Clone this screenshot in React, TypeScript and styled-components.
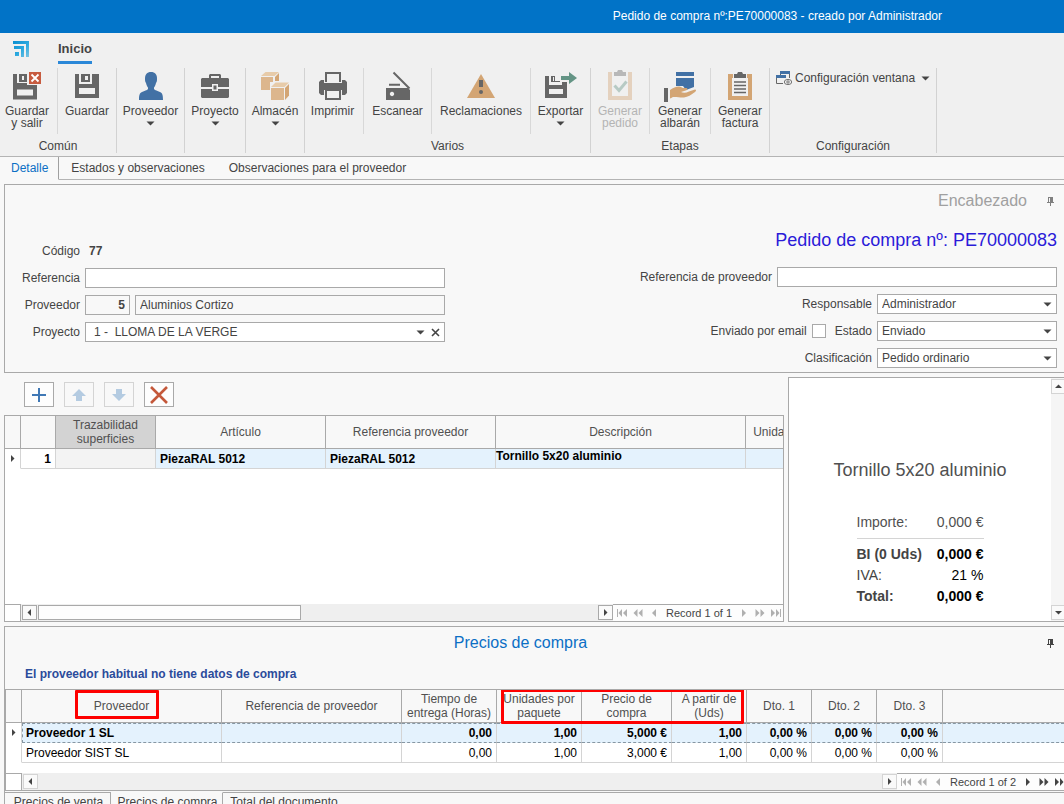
import React from "react";
import styled, { createGlobalStyle, css } from "styled-components";

const line = "#a9a9a9";
const softLine = "#d4d4d4";
const ink = "#444444";
const iconGrey = "#666666";
const blue = "#4271a5";
const tan = "#d3a574";

const GlobalStyle = createGlobalStyle`
  *, *::before, *::after { box-sizing: border-box; }
  html { overflow: hidden; }
  body {
    margin: 0;
    background: #f8f8f8;
    color: ${ink};
    font: 12px/14px "Liberation Sans", Arial, sans-serif;
  }
  button, input, select { font: inherit; color: inherit; margin: 0; border-radius: 0; }
  button { padding: 0; border: 0; background: none; }
  svg { display: block; flex: none; }
`;

const Page = styled.div`
  display: flex;
  flex-direction: column;
  min-height: 100vh;
`;

const TitleBar = styled.header`
  display: flex;
  align-items: center;
  justify-content: flex-end;
  height: 33px;
  padding: 0 122px 2px 0;
  background: #0173c7;
  color: #ffffff;
`;

/* ---------- ribbon ---------- */

const Ribbon = styled.nav`
  background: #f0f0f0;
  border-bottom: 1px solid #b4b4b4;
  padding-bottom: 3px;
`;

const RibbonTabs = styled.div`
  display: flex;
  align-items: flex-start;
  gap: 29px;
  height: 35px;
  padding: 8px 0 0 13px;
`;

const RibbonTab = styled.button`
  height: 23px;
  padding-bottom: 5px;
  border-bottom: 3px solid #2b88d8;
  font-size: 13px;
  font-weight: bold;
  line-height: 15px;
`;

const RibbonGroups = styled.div`
  display: flex;
  height: 85px;
`;

const Group = styled.section`
  display: flex;
  flex-direction: column;
  border-right: 1px solid #d2d2d2;
`;

const GroupButtons = styled.div`
  display: flex;
  flex: 1;
`;

const GroupLabel = styled.div`
  height: 14px;
  text-align: center;
`;

const BigButton = styled.button<{ $w: number }>`
  display: flex;
  flex-direction: column;
  align-items: center;
  width: ${(p) => p.$w}px;
  height: 66px;
  padding-top: 2px;
  line-height: 12px;
  & + & { border-left: 1px solid #d8d8d8; }
  &:first-child:not(:only-child) { padding-right: 3px; }
  &:disabled { color: #b4b4b4; padding-right: 0; }
  &:disabled:first-child { padding-right: 0; }
  &:disabled svg { opacity: 0.4; }
  svg + span { margin-top: 3px; }
`;

const ArrowLine = styled.span`
  display: flex;
  align-items: center;
  height: 12px;
`;

const MenuButton = styled.button`
  display: flex;
  align-items: center;
  gap: 3px;
  width: 166px;
  height: 20px;
  padding-left: 6px;
  span + svg { margin-left: 3px; }
`;

/* ---------- document tabs ---------- */

const DocTabs = styled.div`
  display: flex;
  height: 23px;
`;

const DocTab = styled.button<{ $on?: boolean }>`
  padding: 0 12px;
  border-bottom: 1px solid #b4b4b4;
  ${(p) =>
    p.$on &&
    css`
      padding: 0 10px 0 11px;
      color: #0b6fc5;
      border-bottom-color: transparent;
      border-right: 1px solid #a0a0a0;
    `}
`;

const TabFill = styled.div`
  flex: 1;
  border-bottom: 1px solid #b4b4b4;
`;

/* ---------- header form ---------- */

const Panel = styled.section`
  margin: 4px 0 0 4px;
  border: 1px solid ${line};
  border-right: 0;
`;

const PanelHead = styled.div`
  display: flex;
  align-items: center;
  justify-content: flex-end;
  gap: 20px;
  height: 32px;
  padding-right: 9px;
  font-size: 16px;
  color: #a0a0a0;
  h2 { margin: 0; font: inherit; }
  svg { color: #808080; }
`;

const FormBody = styled.div`
  display: flex;
  justify-content: space-between;
  padding: 0 7px 4px 0;
`;

const LeftFields = styled.div`
  display: grid;
  grid-template-columns: 75px 360px;
  grid-auto-rows: 20px;
  gap: 7px 5px;
  align-items: center;
  align-content: start;
  padding-top: 24px;
  > label, > span { text-align: right; }
`;

const Code = styled.output`
  padding-left: 4px;
  font-weight: bold;
`;

const RightFields = styled.div`
  display: flex;
  flex-direction: column;
  align-items: flex-end;
  gap: 7px;
  padding-top: 11px;
`;

const OrderTitle = styled.h1`
  margin: 0 0 8px;
  font-size: 18px;
  font-weight: normal;
  line-height: 24px;
  color: #2b1bd8;
`;

const Row = styled.div`
  display: flex;
  align-items: center;
  gap: 5px;
  height: 20px;
`;

const TextBox = styled.input<{ $w?: number }>`
  width: ${(p) => (p.$w ? p.$w + "px" : "100%")};
  height: 20px;
  padding: 0 4px;
  border: 1px solid ${line};
  background: #ffffff;
  outline: none;
  &:read-only { background: #f8f8f8; }
`;

const CodeBox = styled(TextBox)`
  flex: none;
  font-weight: bold;
  text-align: right;
`;

const Tick = styled.input`
  appearance: none;
  width: 14px;
  height: 14px;
  margin: 0 4px 0 0;
  border: 1px solid ${line};
  background: #ffffff;
`;

const SelectBox = styled.div<{ $w?: number }>`
  display: flex;
  align-items: center;
  position: relative;
  width: ${(p) => (p.$w ? p.$w + "px" : "100%")};
  height: 20px;
  border: 1px solid ${line};
  background: #ffffff;
  select {
    appearance: none;
    flex: 1;
    height: 18px;
    padding: 0 4px;
    border: 0;
    background: transparent;
    outline: none;
  }
`;

const Caret = styled.span<{ $right: number }>`
  position: absolute;
  right: ${(p) => p.$right}px;
  pointer-events: none;
`;

const ProjectSelect = styled(SelectBox)`
  select { padding-left: 8px; }
`;

const ClearButton = styled.button`
  display: grid;
  place-items: center;
  width: 17px;
  height: 18px;
`;

/* ---------- order lines ---------- */

const Middle = styled.div`
  display: flex;
  gap: 4px;
  min-height: 245px;
  margin: 4px 0 0 4px;
`;

const Lines = styled.section`
  display: flex;
  flex: 1;
  flex-direction: column;
  min-width: 0;
`;

const ToolRow = styled.div`
  display: flex;
  gap: 10px;
  padding: 5px 0 8px 20px;
`;

const ToolButton = styled.button`
  display: grid;
  place-items: center;
  width: 30px;
  height: 25px;
  border: 1px solid ${line};
  background: #fdfdfd;
  &:disabled { border-color: ${softLine}; background: transparent; }
`;

const GridBox = styled.div`
  display: flex;
  flex: 1;
  flex-direction: column;
  justify-content: space-between;
  min-width: 0;
  overflow: hidden;
  border: 1px solid ${line};
  background: #ffffff;
`;

const PriceGrid = styled(GridBox)`
  min-height: 102px;
  border-right: 0;
`;

const DataTable = styled.table<{ $w: string }>`
  table-layout: fixed;
  width: ${(p) => p.$w};
  border-collapse: separate;
  border-spacing: 0;
  color: #000000;
`;

const Th = styled.th<{ $w?: number; $marked?: boolean }>`
  position: relative;
  width: ${(p) => (p.$w ? p.$w + "px" : "auto")};
  height: 33px;
  padding: 0;
  border-right: 1px solid ${line};
  border-bottom: 1px solid ${line};
  background: ${(p) => (p.$marked ? "#d3d3d3" : "#f8f8f8")};
  color: #505050;
  font-weight: normal;
  &:last-child { border-right: 0; }
`;

const Td = styled.td<{ $num?: boolean; $tone?: string; $bold?: boolean }>`
  height: 20px;
  padding: 0 4px;
  border-right: 1px solid ${softLine};
  border-bottom: 1px solid ${softLine};
  background: ${(p) => p.$tone || "#ffffff"};
  text-align: ${(p) => (p.$num ? "right" : "left")};
  font-weight: ${(p) => (p.$bold ? "bold" : "normal")};
  white-space: nowrap;
  &:last-child { border-right: 0; }
`;

const MarkerTd = styled(Td)`
  padding-left: 3px;
  border-bottom-color: transparent;
`;

const TopTd = styled(Td)`
  padding: 0;
  vertical-align: top;
`;

const FocusTd = styled(Td)`
  border-top: 1px dashed #8797a3;
  border-bottom: 1px dashed #8797a3;
  &:nth-child(2) { border-left: 1px dashed #8797a3; padding-left: 3px; }
`;

const Highlight = styled.span<{ $l: number; $t: number; $w: number; $h: number }>`
  position: absolute;
  z-index: 2;
  left: ${(p) => p.$l}px;
  top: ${(p) => p.$t}px;
  width: ${(p) => p.$w}px;
  height: ${(p) => p.$h}px;
  border: 3px solid #fe0000;
  border-radius: 1px;
  pointer-events: none;
`;

const GridFoot = styled.div`
  display: flex;
  height: 17px;
`;

const FootCorner = styled.div`
  width: 16px;
  border-top: 1px solid ${line};
  border-right: 1px solid ${line};
`;

const Track = styled.div`
  display: flex;
  align-items: center;
  flex: 1;
  gap: 1px;
  padding: 0 0 0 1px;
  background: #efefef;
`;

const StepButton = styled.button<{ $soft?: boolean }>`
  display: grid;
  place-items: center;
  width: 15px;
  height: 15px;
  border: 1px solid ${(p) => (p.$soft ? softLine : line)};
  background: #fafafa;
`;

const Thumb = styled.div`
  width: 263px;
  height: 15px;
  border: 1px solid ${line};
  background: #fdfdfd;
`;

const Spacer = styled.div`
  flex: 1;
`;

const Pager = styled.div<{ $w: number }>`
  display: flex;
  align-items: center;
  flex: none;
  width: ${(p) => p.$w}px;
  overflow: hidden;
  padding-left: 1px;
  border-top: 1px solid ${line};
  background: #fdfdfd;
  font-size: 11px;
  span { flex: none; width: 74px; text-align: center; }
`;

const PagerButton = styled.button`
  display: grid;
  place-items: center;
  flex: none;
  width: 16px;
  height: 16px;
  color: #444444;
  &:disabled { color: #b0b0b0; }
`;

/* ---------- totals ---------- */

const Totals = styled.aside`
  display: flex;
  width: 276px;
  border: 1px solid ${line};
  border-right: 0;
  background: #ffffff;
`;

const TotalsBody = styled.div`
  display: flex;
  flex: 1;
  flex-direction: column;
  align-items: center;
  padding-top: 80px;
  h3 {
    margin: 0 0 30px;
    font-size: 18px;
    font-weight: normal;
    line-height: 24px;
    color: #505050;
  }
`;

const TotalsTable = styled.table`
  width: 127px;
  border-collapse: collapse;
  font-size: 14px;
  line-height: 21px;
  white-space: nowrap;
  th, td { padding: 0; font-weight: normal; }
  th { text-align: left; }
  td { text-align: right; color: #000000; }
`;

const FirstTotal = styled.tr`
  th, td { padding-bottom: 5px; border-bottom: 1px solid ${softLine}; color: #505050; }
  & + tr > * { padding-top: 5px; }
`;

const StrongTotal = styled.tr`
  th, td { font-weight: bold; }
`;

const VTrack = styled.div`
  display: flex;
  flex-direction: column;
  justify-content: space-between;
  width: 13px;
  padding: 1px 0;
  background: #f5f5f5;
`;

/* ---------- purchase prices ---------- */

const PricePanel = styled.section`
  margin: 4px 0 0 4px;
  border: 1px solid ${line};
  border-right: 0;
  border-bottom: 0;
`;

const PriceHead = styled.div`
  display: flex;
  align-items: center;
  height: 32px;
  padding-right: 9px;
  color: ${ink};
  h2 {
    flex: 1;
    margin: 0;
    padding-right: 11px;
    font-size: 16px;
    font-weight: normal;
    line-height: 20px;
    text-align: center;
    color: #0b6fc5;
  }
`;

const Notice = styled.p`
  margin: 8px 0 8px 20px;
  font-weight: bold;
  color: #2b4b9b;
`;

const FootTabs = styled.div`
  display: flex;
  height: 22px;
  margin-top: 1px;
`;

const FootTab = styled.button<{ $w: number; $on?: boolean }>`
  width: ${(p) => p.$w}px;
  padding: 0 0 4px 2px;
  border-top: 1px solid ${(p) => (p.$on ? "transparent" : line)};
  border-right: 1px solid ${line};
  &:last-of-type { border-right: 0; }
`;

const FootFill = styled.div`
  flex: 1;
  border-top: 1px solid ${line};
`;

/* ---------- drawings ---------- */

const Icon = ({ children, size = 32 }: { children: React.ReactNode; size?: number }) => (
  <svg width={size} height={size} viewBox={`0 0 ${size} ${size}`} aria-hidden="true">
    {children}
  </svg>
);

const Down = () => (
  <svg width="9" height="5" viewBox="0 0 9 5" aria-hidden="true">
    <path d="M0.500 0.500h8L4.500 4.500z" fill="#444" />
  </svg>
);

const Side = ({ dir }: { dir: "l" | "r" | "u" | "d" }) => {
  const d = { l: "M6 1v7L2.500 4.500z", r: "M3 1v7L6.500 4.500z", u: "M1 6h7L4.500 2.500z", d: "M1 3h7L4.500 6.500z" }[dir];
  return (
    <svg width="9" height="9" viewBox="0 0 9 9" aria-hidden="true">
      <path d={d} fill="#444" />
    </svg>
  );
};

const Pin = () => (
  <svg width="8" height="9" viewBox="0 0 8 9" aria-hidden="true">
    <path d="M1 0h5v5h1v1H4v3H3V6H0V5h1zM2 1v4h1V1z" fill="currentColor" fillRule="evenodd" />
  </svg>
);

const Logo = () => (
  <svg width="16" height="16" viewBox="0 0 16 16" aria-hidden="true">
    <defs>
      <linearGradient id="logoShade" x1="0" y1="0" x2="1" y2="1">
        <stop offset="0" stopColor="#0d8fd0" />
        <stop offset="0.550" stopColor="#2ba9df" />
        <stop offset="1" stopColor="#7cc4e2" />
      </linearGradient>
    </defs>
    <path d="M0 0h16v16h-3V3H0zM1 5h10v11H8V8H1zM2 11h4v4H2z" fill="url(#logoShade)" />
  </svg>
);

const floppy = "M0 0h4v10h13V0h7v24H0zM4 14v6h16v-6zM6 0h9v8H6zM10 2v4h3V2z";

const icons = {
  saveExit: (
    <>
      <path d="M2 4h4v9h10v2h10v14.500H2zM6 19.500v6h16v-6zM8 4h8v8H8zM11 6v4h2V6z" fill={iconGrey} fillRule="evenodd" />
      <path d="M18 2h12v12H18z" fill="#c75b3f" />
      <path d="M20.500 4.500l7 7M27.500 4.500l-7 7" stroke="#fff" strokeWidth="1.800" />
    </>
  ),
  save: <path transform="translate(4 4)" d={floppy} fill={iconGrey} fillRule="evenodd" />,
  user: (
    <path
      d="M16 2c4 0 6 2.500 6 6.500 0 2 0 3-1 4.500-.6 2.500-1.500 4-2 4.500v1.500c1 1.300 3.500 2 6 3 2.500 1 3 3.500 3 8H4c0-4.500.5-7 3-8 2.500-1 5-1.700 6-3v-1.500c-.5-.5-1.400-2-2-4.500-1-1.500-1-2.500-1-4.500C10 4.500 12 2 16 2z"
      fill={blue}
    />
  ),
  brief: (
    <path
      d="M10 8V5l1-1h10l1 1v3h7l1 1v8H19v-3h-6v3H2V9l1-1zM12 6v2h8V6zM2 19h11v2h6v-2h11v8l-1 1H3l-1-1zM14.500 15.500h3v4h-3z"
      fill={iconGrey}
      fillRule="evenodd"
    />
  ),
  boxes: (
    <>
      <path d="M2 7h12v5h-3v8H2z" fill="#dcb68d" />
      <path d="M2 6l4.500-4H20l-4.500 4z" fill="#e7cba9" />
      <path d="M16 7l4-4v8h-4z" fill={tan} />
      <path d="M12 18h13v12H12z" fill="#dcb68d" />
      <path d="M12 17l4.500-4.500H30L25.500 17z" fill="#e7cba9" />
      <path d="M26 18l4-4v11.500L26 30z" fill={tan} />
    </>
  ),
  print: (
    <>
      <path d="M8 2h16v10h-2V4H10v8H8z" fill={iconGrey} />
      <path d="M2 12l2-2h3v3h18v-3h3l2 2v11l-2 2h-3v-5H7v5H4l-2-2z" fill={iconGrey} />
      <path d="M8 19h16v11H8zM10 21v7h12v-7z" fill={iconGrey} fillRule="evenodd" />
    </>
  ),
  scan: (
    <>
      <path d="M4 18h22l2 2v10H4zM10 21.800a2.200 2.200 0 1 0 .01 0z" fill={iconGrey} fillRule="evenodd" />
      <path d="M11.500 2.500L27.500 18.500M7 14.800h11" stroke={iconGrey} strokeWidth="2" />
    </>
  ),
  warn: (
    <>
      <path d="M16 4l14 24H2z" fill={tan} />
      <path d="M14 10h4v7h-4z" fill={iconGrey} />
      <circle cx="16" cy="22" r="2" fill={iconGrey} />
    </>
  ),
  exportTo: (
    <>
      <path d="M0 6h4v9h13v-3h5v16H0zM4 19v5h14v-5zM6 6h4v6H6zM8 7v4h1V7zM10 11h5v1h-5z" fill={iconGrey} fillRule="evenodd" />
      <path d="M16 6h8V2l8 6-8 6v-4h-8z" fill="#649485" />
    </>
  ),
  order: (
    <>
      <path d="M4 2h4v5h16V2h4v28H4zM8 7v19h16V7z" fill={tan} fillRule="evenodd" />
      <path d="M10 2h3l1-2h4l1 2h3v4H10z" fill={iconGrey} />
      <path d="M10.500 15.500l4.500 5 7.500-9" fill="none" stroke="#649485" strokeWidth="3" />
    </>
  ),
  note: (
    <>
      <path d="M12 2h18v4H12zM12 8h18v9l-8 3-3-4h-7z" fill={blue} />
      <path d="M0 18h4v14H0z" fill={iconGrey} />
      <path
        d="M6 20c3-2 6-3.500 9-3.500 2 0 2 1 4 1.500h3c1.500 0 2 1.500.5 2.200L17 22c2 1 5 1 8-.5l6-2c1.500 0 1.200 1.500 0 2.500-4 3-7 5-11 5.500-4 .3-8-1-11-.5-1.500.5-2 1.500-3 1.500z"
        fill={tan}
      />
    </>
  ),
  invoice: (
    <>
      <path d="M4 4h5v4H8v18h16V8h-1V4h5v26H4z" fill={tan} />
      <path d="M10 4h3l1-2h4l1 2h3v4H10z" fill={iconGrey} />
      <path d="M10 13h12M10 16.500h12M10 20h12M10 23.500h12" transform="translate(0 -1)" stroke={iconGrey} strokeWidth="1.500" />
    </>
  ),
};

const WindowIcon = () => (
  <svg width="16" height="16" viewBox="0 0 16 16" aria-hidden="true">
    <path d="M4 1h10v3H4zM0 5h10v3H0z" fill={blue} />
    <path d="M13.500 4v4M0.500 8v5.500H7M4.500 4v1" fill="none" stroke={iconGrey} />
    <ellipse cx="12" cy="12" rx="3.700" ry="2.600" fill="#f0f0f0" stroke={iconGrey} strokeWidth="0.900" />
    <circle cx="12" cy="12" r="1.200" fill="none" stroke={iconGrey} strokeWidth="0.900" />
  </svg>
);

const pagerShapes: Record<string, string> = {
  first: "M0 0h1v8H0zM5 0v8L1.500 4zM10 0v8L6 4z",
  prevPage: "M4.500 0v8L0.500 4zM9.500 0v8L5.500 4z",
  prev: "M7 0v8L3 4z",
  next: "M3 0v8l4-4z",
  nextPage: "M0.500 0v8l4-4zM5.500 0v8l4-4z",
  last: "M0 0v8l4-4zM5 0v8l3.500-4zM9 0h1v8H9z",
};

const PagerStep = ({ kind, label, off }: { kind: string; label: string; off?: boolean }) => (
  <PagerButton aria-label={label} disabled={off}>
    <svg width="10" height="8" viewBox="0 0 10 8" aria-hidden="true">
      <path d={pagerShapes[kind]} fill="currentColor" />
    </svg>
  </PagerButton>
);

const RecordPager = ({ text, width, more }: { text: string; width: number; more?: boolean }) => (
  <Pager $w={width}>
    <PagerStep kind="first" label="Primero" off />
    <PagerStep kind="prevPage" label="Página anterior" off />
    <PagerStep kind="prev" label="Anterior" off />
    <span>{text}</span>
    <PagerStep kind="next" label="Siguiente" off={!more} />
    <PagerStep kind="nextPage" label="Página siguiente" off={!more} />
    <PagerStep kind="last" label="Último" off={!more} />
  </Pager>
);

/* ---------- ribbon data ---------- */

type Action = { icon: keyof typeof icons; w: number; lines: string[]; menu?: boolean; off?: boolean };

const groups: { label: string; items: Action[] }[] = [
  {
    label: "Común",
    items: [
      { icon: "saveExit", w: 57, lines: ["Guardar", "y salir"] },
      { icon: "save", w: 59, lines: ["Guardar"] },
    ],
  },
  { label: "", items: [{ icon: "user", w: 67, lines: ["Proveedor"], menu: true }] },
  { label: "", items: [{ icon: "brief", w: 60, lines: ["Proyecto"], menu: true }] },
  { label: "", items: [{ icon: "boxes", w: 58, lines: ["Almacén"], menu: true }] },
  {
    label: "Varios",
    items: [
      { icon: "print", w: 58, lines: ["Imprimir"] },
      { icon: "scan", w: 68, lines: ["Escanear"] },
      { icon: "warn", w: 99, lines: ["Reclamaciones"] },
      { icon: "exportTo", w: 60, lines: ["Exportar"], menu: true },
    ],
  },
  {
    label: "Etapas",
    items: [
      { icon: "order", w: 58, lines: ["Generar", "pedido"], off: true },
      { icon: "note", w: 61, lines: ["Generar", "albarán"] },
      { icon: "invoice", w: 59, lines: ["Generar", "factura"] },
    ],
  },
];

const Combo = ({ id, value }: { id: string; value: string }) => (
  <SelectBox $w={180}>
    <select id={id} defaultValue={value}>
      <option>{value}</option>
    </select>
    <Caret $right={4}>
      <Down />
    </Caret>
  </SelectBox>
);

const prices = [
  ["Proveedor 1 SL", "", "0,00", "1,00", "5,000 €", "1,00", "0,00 %", "0,00 %", "0,00 %", ""],
  ["Proveedor SIST SL", "", "0,00", "1,00", "3,000 €", "1,00", "0,00 %", "0,00 %", "0,00 %", ""],
];

export default function App() {
  return (
    <Page>
      <GlobalStyle />
      <TitleBar>Pedido de compra nº:PE70000083 - creado por Administrador</TitleBar>

      <Ribbon>
        <RibbonTabs>
          <Logo />
          <RibbonTab>Inicio</RibbonTab>
        </RibbonTabs>
        <RibbonGroups>
          {groups.map((g, i) => (
            <Group key={i}>
              <GroupButtons>
                {g.items.map((a) => (
                  <BigButton key={a.icon} $w={a.w} disabled={a.off}>
                    <Icon>{icons[a.icon]}</Icon>
                    {a.lines.map((t) => (
                      <span key={t}>{t}</span>
                    ))}
                    {a.menu && (
                      <ArrowLine>
                        <Down />
                      </ArrowLine>
                    )}
                  </BigButton>
                ))}
              </GroupButtons>
              <GroupLabel>{g.label}</GroupLabel>
            </Group>
          ))}
          <Group>
            <GroupButtons>
              <MenuButton>
                <WindowIcon />
                <span>Configuración ventana</span>
                <Down />
              </MenuButton>
            </GroupButtons>
            <GroupLabel>Configuración</GroupLabel>
          </Group>
        </RibbonGroups>
      </Ribbon>

      <DocTabs>
        <DocTab $on>Detalle</DocTab>
        <DocTab>Estados y observaciones</DocTab>
        <DocTab>Observaciones para el proveedor</DocTab>
        <TabFill />
      </DocTabs>

      <Panel>
        <PanelHead>
          <h2>Encabezado</h2>
          <Pin />
        </PanelHead>
        <FormBody>
          <LeftFields>
            <label htmlFor="codigo">Código</label>
            <Code id="codigo">77</Code>
            <label htmlFor="referencia">Referencia</label>
            <TextBox id="referencia" />
            <label htmlFor="proveedor">Proveedor</label>
            <Row>
              <CodeBox id="proveedor" $w={45} readOnly value="5" />
              <TextBox aria-label="Nombre del proveedor" readOnly value="Aluminios Cortizo" />
            </Row>
            <label htmlFor="proyecto">Proyecto</label>
            <ProjectSelect>
              <select id="proyecto" defaultValue="1">
                <option value="1">{"1 -\u00a0 LLOMA DE LA VERGE"}</option>
              </select>
              <Caret $right={19}>
                <Down />
              </Caret>
              <ClearButton aria-label="Quitar proyecto">
                <svg width="9" height="9" viewBox="0 0 9 9" aria-hidden="true">
                  <path d="M1 1l7 7M8 1L1 8" stroke="#444" strokeWidth="1.600" />
                </svg>
              </ClearButton>
            </ProjectSelect>
          </LeftFields>
          <RightFields>
            <OrderTitle>Pedido de compra nº: PE70000083</OrderTitle>
            <Row>
              <label htmlFor="refprov">Referencia de proveedor</label>
              <TextBox id="refprov" $w={280} />
            </Row>
            <Row>
              <label htmlFor="responsable">Responsable</label>
              <Combo id="responsable" value="Administrador" />
            </Row>
            <Row>
              <label htmlFor="email">Enviado por email</label>
              <Tick id="email" type="checkbox" />
              <label htmlFor="estado">Estado</label>
              <Combo id="estado" value="Enviado" />
            </Row>
            <Row>
              <label htmlFor="clasificacion">Clasificación</label>
              <Combo id="clasificacion" value="Pedido ordinario" />
            </Row>
          </RightFields>
        </FormBody>
      </Panel>

      <Middle>
        <Lines>
          <ToolRow>
            <ToolButton aria-label="Añadir línea">
              <svg width="14" height="14" viewBox="0 0 14 14" aria-hidden="true">
                <path d="M7 0v14M0 7h14" stroke="#3f78b5" strokeWidth="2" />
              </svg>
            </ToolButton>
            <ToolButton aria-label="Subir" disabled>
              <svg width="14" height="12" viewBox="0 0 14 12" aria-hidden="true">
                <path d="M7 0l7 7h-4v5H4V7H0z" fill="#b4cbe1" />
              </svg>
            </ToolButton>
            <ToolButton aria-label="Bajar" disabled>
              <svg width="14" height="12" viewBox="0 0 14 12" aria-hidden="true">
                <path d="M7 12l7-7h-4V0H4v5H0z" fill="#b4cbe1" />
              </svg>
            </ToolButton>
            <ToolButton aria-label="Eliminar línea">
              <svg width="18" height="18" viewBox="0 0 18 18" aria-hidden="true">
                <path d="M1 1l16 16M17 1L1 17" stroke="#c4583a" strokeWidth="2.600" />
              </svg>
            </ToolButton>
          </ToolRow>
          <GridBox>
            <DataTable $w="806px">
              <thead>
                <tr>
                  <Th $w={16} />
                  <Th $w={35} />
                  <Th $w={100} $marked>
                    Trazabilidad
                    <br />
                    superficies
                  </Th>
                  <Th $w={170}>Artículo</Th>
                  <Th $w={170}>Referencia proveedor</Th>
                  <Th $w={250}>Descripción</Th>
                  <Th $w={65}>Unidades</Th>
                </tr>
              </thead>
              <tbody>
                <tr>
                  <MarkerTd>
                    <Side dir="r" />
                  </MarkerTd>
                  <Td $num $bold>1</Td>
                  <Td $tone="#f3f3f3" />
                  <Td $tone="#e4f2fd" $bold>PiezaRAL 5012</Td>
                  <Td $tone="#e4f2fd" $bold>PiezaRAL 5012</Td>
                  <TopTd $tone="#e4f2fd" $bold>Tornillo 5x20 aluminio</TopTd>
                  <Td $tone="#e4f2fd" />
                </tr>
              </tbody>
            </DataTable>
            <GridFoot>
              <FootCorner />
              <Track>
                <StepButton aria-label="Desplazar a la izquierda">
                  <Side dir="l" />
                </StepButton>
                <Thumb />
                <Spacer />
                <StepButton aria-label="Desplazar a la derecha">
                  <Side dir="r" />
                </StepButton>
              </Track>
              <RecordPager text="Record 1 of 1" width={170} />
            </GridFoot>
          </GridBox>
        </Lines>

        <Totals>
          <TotalsBody>
            <h3>Tornillo 5x20 aluminio</h3>
            <TotalsTable>
              <tbody>
                <FirstTotal>
                  <th scope="row">Importe:</th>
                  <td>0,000 €</td>
                </FirstTotal>
                <StrongTotal>
                  <th scope="row">BI (0 Uds)</th>
                  <td>0,000 €</td>
                </StrongTotal>
                <tr>
                  <th scope="row">IVA:</th>
                  <td>21 %</td>
                </tr>
                <StrongTotal>
                  <th scope="row">Total:</th>
                  <td>0,000 €</td>
                </StrongTotal>
              </tbody>
            </TotalsTable>
          </TotalsBody>
          <VTrack>
            <StepButton $soft aria-label="Subir">
              <Side dir="u" />
            </StepButton>
            <StepButton $soft aria-label="Bajar">
              <Side dir="d" />
            </StepButton>
          </VTrack>
        </Totals>
      </Middle>

      <PricePanel>
        <PriceHead>
          <h2>Precios de compra</h2>
          <Pin />
        </PriceHead>
        <Notice>El proveedor habitual no tiene datos de compra</Notice>
        <PriceGrid>
          <DataTable $w="100%">
            <thead>
              <tr>
                <Th $w={16} />
                <Th $w={200}>
                  Proveedor
                  <Highlight $l={53} $t={0} $w={84} $h={29} />
                </Th>
                <Th $w={180}>Referencia de proveedor</Th>
                <Th $w={95}>
                  Tiempo de
                  <br />
                  entrega (Horas)
                </Th>
                <Th $w={85}>
                  Unidades por
                  <br />
                  paquete
                  <Highlight $l={4} $t={-1} $w={243} $h={35} />
                </Th>
                <Th $w={90}>
                  Precio de
                  <br />
                  compra
                </Th>
                <Th $w={75}>
                  A partir de
                  <br />
                  (Uds)
                </Th>
                <Th $w={65}>Dto. 1</Th>
                <Th $w={65}>Dto. 2</Th>
                <Th $w={66}>Dto. 3</Th>
                <Th />
              </tr>
            </thead>
            <tbody>
              {prices.map((row, r) => {
                const Cell = r === 0 ? FocusTd : Td;
                return (
                  <tr key={row[0]}>
                    <MarkerTd>{r === 0 && <Side dir="r" />}</MarkerTd>
                    {row.map((v, c) => (
                      <Cell key={c} $num={c > 1} $bold={r === 0} $tone={r === 0 ? "#e4f2fd" : undefined}>
                        {v}
                      </Cell>
                    ))}
                  </tr>
                );
              })}
            </tbody>
          </DataTable>
          <GridFoot>
            <FootCorner />
            <Track>
              <StepButton $soft aria-label="Desplazar a la izquierda">
                <Side dir="l" />
              </StepButton>
              <Spacer />
              <StepButton $soft aria-label="Desplazar a la derecha">
                <Side dir="r" />
              </StepButton>
            </Track>
            <RecordPager text="Record 1 of 2" width={167} more />
          </GridFoot>
        </PriceGrid>
        <FootTabs>
          <FootTab $w={106}>Precios de venta</FootTab>
          <FootTab $w={112} $on>Precios de compra</FootTab>
          <FootTab $w={120}>Total del documento</FootTab>
          <FootFill />
        </FootTabs>
      </PricePanel>
    </Page>
  );
}
